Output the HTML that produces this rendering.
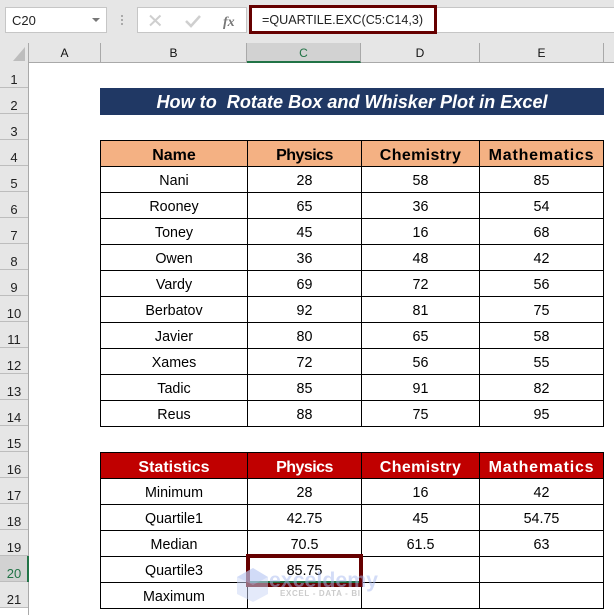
<!DOCTYPE html>
<html><head><meta charset="utf-8">
<style>
html,body{margin:0;padding:0}
body{width:614px;height:615px;overflow:hidden;background:#fff;position:relative;font-family:"Liberation Sans",sans-serif;color:#000}
.a{position:absolute}
.bar{left:0;top:0;width:614px;height:62px;background:#e6e6e6}
.box{background:#fff;border:1px solid #c6c6c6;box-sizing:border-box}
.ch{top:43px;height:19px;line-height:20px;text-align:center;font-size:12px;color:#111;box-sizing:border-box;border-right:1px solid #a9a9a9}
.rh{left:0;width:28px;height:26px;box-sizing:border-box;text-align:center;font-size:13px;line-height:28px;padding-top:4px;overflow:hidden;color:#222;background:#e6e6e6;border-bottom:1px solid #bdbdbd}
table{position:absolute;left:100px;border-collapse:collapse;table-layout:fixed;width:503px;font-size:14.3px}
td{border:1px solid #000;height:25px;padding:4px 0 0;text-align:center;line-height:21px;white-space:nowrap;overflow:hidden;box-sizing:border-box}
tr{height:26px}
th{border:1px solid #000;height:25px;padding:4px 0 0;text-align:center;font-size:16px;line-height:21px;font-weight:bold;box-sizing:border-box;white-space:nowrap}
.o th{background:#f4b183;color:#000}
.r th{background:#c00000;color:#fff}
.ph{letter-spacing:-.55px}
.ce{letter-spacing:.35px}
.ma{letter-spacing:.8px}
</style></head><body>
<div class="a bar"></div>
<div class="a" style="left:0;top:62px;width:614px;height:1px;background:#a9a9a9"></div>

<div class="a box" style="left:5px;top:7px;width:102px;height:26px;font-size:13px;line-height:25px;padding-left:6px;color:#222">C20</div>
<div class="a" style="left:92px;top:18px;width:0;height:0;border-left:4px solid transparent;border-right:4px solid transparent;border-top:4px solid #777"></div>
<div class="a" style="left:121px;top:15px;width:2px;height:2px;background:#aaa;box-shadow:0 4px 0 #aaa,0 8px 0 #aaa"></div>
<div class="a box" style="left:137px;top:7px;width:110px;height:26px"></div>
<svg class="a" style="left:137px;top:7px" width="110" height="26">
<path d="M13 8.5 L23.5 18.5 M23.5 8.5 L13 18.5" stroke="#cfcfcf" stroke-width="2" fill="none"/>
<path d="M49 14 L54 19 L63 9" stroke="#cfcfcf" stroke-width="2.5" fill="none"/>
<text x="86" y="19" font-family="Liberation Serif,serif" font-style="italic" font-weight="bold" font-size="14" fill="#777">fx</text>
</svg>
<div class="a box" style="left:249px;top:7px;width:370px;height:26px"></div>
<div class="a" style="left:249px;top:5px;width:188px;height:29px;box-sizing:border-box;border:3px solid #660000;font-size:12.6px;line-height:24px;padding-left:10px;color:#222;white-space:nowrap">=QUARTILE.EXC(C5:C14,3)</div>

<svg class="a" style="left:0;top:43px" width="29" height="19"><path d="M25 4 V18 H13 Z" fill="#bdbdbd"/></svg>
<div class="a ch" style="left:28px;width:73px;border-left:1px solid #a9a9a9">A</div>
<div class="a ch" style="left:101px;width:146px">B</div>
<div class="a ch" style="left:247px;width:114px;background:#d2d2d2;border-bottom:2px solid #217346;color:#217346;height:20px;line-height:20px">C</div>
<div class="a ch" style="left:361px;width:119px">D</div>
<div class="a ch" style="left:480px;width:124px">E</div>

<div class="a" style="left:28px;top:43px;width:1px;height:572px;background:#a9a9a9"></div>
<div class="a rh" style="top:62px">1</div>
<div class="a rh" style="top:88px">2</div>
<div class="a rh" style="top:114px">3</div>
<div class="a rh" style="top:140px">4</div>
<div class="a rh" style="top:166px">5</div>
<div class="a rh" style="top:192px">6</div>
<div class="a rh" style="top:218px">7</div>
<div class="a rh" style="top:244px">8</div>
<div class="a rh" style="top:270px">9</div>
<div class="a rh" style="top:296px">10</div>
<div class="a rh" style="top:322px">11</div>
<div class="a rh" style="top:348px">12</div>
<div class="a rh" style="top:374px">13</div>
<div class="a rh" style="top:400px">14</div>
<div class="a rh" style="top:426px">15</div>
<div class="a rh" style="top:452px">16</div>
<div class="a rh" style="top:478px">17</div>
<div class="a rh" style="top:504px">18</div>
<div class="a rh" style="top:530px">19</div>
<div class="a rh" style="top:556px;background:#d2d2d2;color:#217346">20</div>
<div class="a rh" style="top:582px">21</div>
<div class="a" style="left:27px;top:556px;width:2px;height:26px;background:#217346"></div>

<div class="a" style="left:100px;top:88px;width:504px;height:27px;background:#203864;color:#fff;text-align:center;font-weight:bold;font-style:italic;font-size:18.1px;line-height:28px;white-space:pre">How to  Rotate Box and Whisker Plot in Excel</div>

<table style="top:140px">
<colgroup><col style="width:147px"><col style="width:114px"><col style="width:118px"><col style="width:124px"></colgroup>
<tr class="o"><th>Name</th><th class="ph">Physics</th><th class="ce">Chemistry</th><th class="ma">Mathematics</th></tr>
<tr><td>Nani</td><td>28</td><td>58</td><td>85</td></tr>
<tr><td>Rooney</td><td>65</td><td>36</td><td>54</td></tr>
<tr><td>Toney</td><td>45</td><td>16</td><td>68</td></tr>
<tr><td>Owen</td><td>36</td><td>48</td><td>42</td></tr>
<tr><td>Vardy</td><td>69</td><td>72</td><td>56</td></tr>
<tr><td>Berbatov</td><td>92</td><td>81</td><td>75</td></tr>
<tr><td>Javier</td><td>80</td><td>65</td><td>58</td></tr>
<tr><td>Xames</td><td>72</td><td>56</td><td>55</td></tr>
<tr><td>Tadic</td><td>85</td><td>91</td><td>82</td></tr>
<tr><td>Reus</td><td>88</td><td>75</td><td>95</td></tr>
</table>

<table style="top:452px">
<colgroup><col style="width:147px"><col style="width:114px"><col style="width:118px"><col style="width:124px"></colgroup>
<tr class="r"><th>Statistics</th><th class="ph">Physics</th><th class="ce">Chemistry</th><th class="ma">Mathematics</th></tr>
<tr><td>Minimum</td><td>28</td><td>16</td><td>42</td></tr>
<tr><td>Quartile1</td><td>42.75</td><td>45</td><td>54.75</td></tr>
<tr><td>Median</td><td>70.5</td><td>61.5</td><td>63</td></tr>
<tr><td>Quartile3</td><td>85.75</td><td></td><td></td></tr>
<tr><td>Maximum</td><td></td><td></td><td></td></tr>
</table>

<div class="a" style="left:248px;top:581px;width:113px;height:2px;background:#217346"></div>
<div class="a" style="left:246px;top:554px;width:117px;height:33px;box-sizing:border-box;border:4px solid #660000"></div>

<svg class="a" style="left:234px;top:566px" width="150" height="36">
<path d="M3 11 L19 2 L34 11 V28 L19 36 L3 28 Z" fill="#c9d6f5" opacity=".5"/>
<path d="M19 2 L34 11 L19 19 L3 11 Z" fill="#aebff0" opacity=".35"/>
<text x="35" y="21" font-family="Liberation Sans,sans-serif" font-weight="bold" font-size="21" fill="#a9bbf0" opacity=".5" textLength="109" lengthAdjust="spacingAndGlyphs">exceldemy</text>
<text x="46" y="30" font-family="Liberation Sans,sans-serif" font-weight="bold" font-size="8" fill="#999" opacity=".5" textLength="80" lengthAdjust="spacing">EXCEL - DATA - BI</text>
</svg>
</body></html>
